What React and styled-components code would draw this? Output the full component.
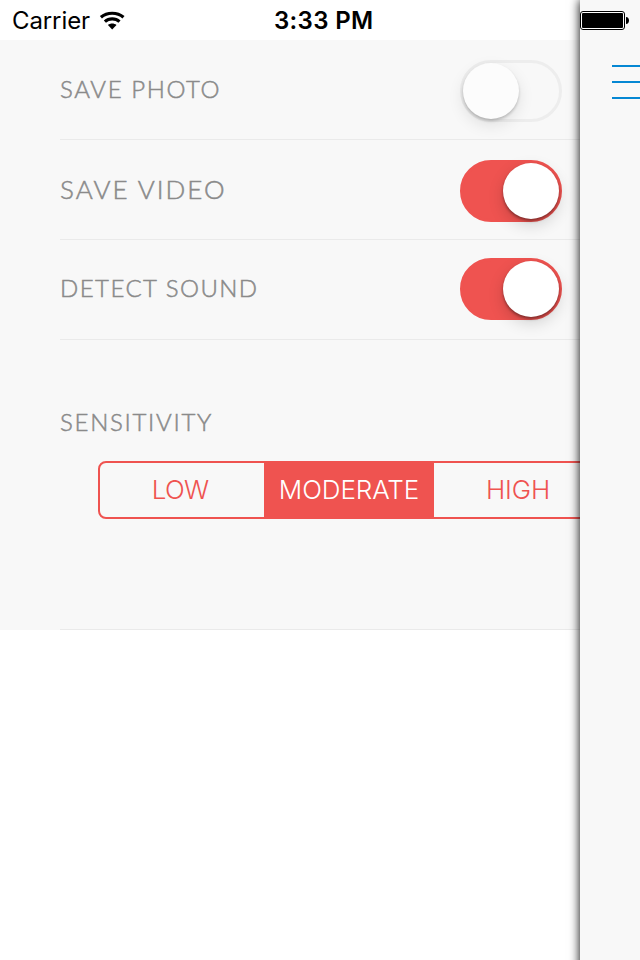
import React from "react";
import styled, { createGlobalStyle } from "styled-components";

const GlobalStyle = createGlobalStyle`
  * { box-sizing: border-box; }
  body { margin: 0; background: #fff; font-family: Inter, sans-serif; }
`;

const RED = "#ef5350";

const Screen = styled.div`
  display: grid;
  grid-template-columns: 580px 60px;
  width: 640px;
  height: 960px;
  overflow: hidden;
  background: #fff;
`;

const Drawer = styled.main`
  min-width: 0;
  overflow: hidden;
`;

const StatusBar = styled.header`
  display: grid;
  grid-template-columns: 78px 26px 1fr;
  column-gap: 9px;
  align-items: center;
  height: 40px;
  padding: 1px 0 0 12px;
  color: #000;
  font-size: 24px;
  line-height: 39px;
  white-space: nowrap;
`;

const Carrier = styled.span`
  letter-spacing: -0.1px;
`;

const Clock = styled.time`
  padding-left: 140px;
  font-weight: 560;
  letter-spacing: 0.35px;
`;

const WifiIcon = styled.svg`
  display: block;
  width: 26px;
  height: 20px;
`;

const Settings = styled.section`
  height: 590px;
  padding-left: 60px;
  background: #f8f8f8;
`;

const SettingRow = styled.div`
  display: flex;
  justify-content: space-between;
  align-items: flex-start;
  height: 100px;
  padding: ${(p) => p.$top}px 18px 0 0;
  border-bottom: 1px solid #eaeaea;
`;

const Label = styled.span`
  display: block;
  margin-top: ${(p) => p.$shift || 0}px;
  color: #8a8a8a;
  -webkit-text-stroke: 0.5px #8a8a8a;
  font-family: Lato, sans-serif;
  font-weight: 300;
  font-size: ${(p) => p.$size || 24}px;
  line-height: 58px;
  letter-spacing: ${(p) => p.$spacing}px;
  white-space: nowrap;
`;

const Toggle = styled.button`
  display: flex;
  justify-content: ${(p) => (p.$on ? "flex-end" : "flex-start")};
  flex: none;
  width: 102px;
  height: 62px;
  padding: 0;
  border: 3px solid ${(p) => (p.$on ? RED : "#ededed")};
  border-radius: 31px;
  background: ${(p) => (p.$on ? RED : "#f8f8f8")};
`;

const Knob = styled.span`
  width: 56px;
  height: 56px;
  border-radius: 50%;
  background: ${(p) => (p.$on ? "#fff" : "#fcfcfc")};
  box-shadow: ${(p) =>
    p.$on
      ? "0 2px 3px rgba(0,0,0,.38), 0 6px 16px rgba(0,0,0,.16)"
      : "0 2px 3px rgba(0,0,0,.2), 0 6px 16px rgba(0,0,0,.1)"};
`;

const Sensitivity = styled.div`
  height: 290px;
  padding-top: 53px;
  border-bottom: 1px solid #eaeaea;
`;

const Segments = styled.div`
  display: grid;
  grid-template-columns: 164px 170px 166px;
  width: 504px;
  height: 58px;
  margin: 10px 0 0 38px;
  border: 2px solid ${RED};
  border-radius: 8px;
`;

const Segment = styled.button`
  padding: 0 ${(p) => p.$inset || 0}px 0 ${(p) => p.$nudge || 0}px;
  border: 0;
  background: ${(p) => (p.$active ? RED : "transparent")};
  color: ${(p) => (p.$active ? "#fff" : RED)};
  font: 350 26px/54px Inter, sans-serif;
  letter-spacing: ${(p) => p.$spacing}px;
`;

const SidePanel = styled.aside`
  position: relative;
  height: 972px;
  background: #f8f8f8;
  box-shadow: 0 0 10px #000;
`;

const BatteryIcon = styled.svg`
  display: block;
  width: 50px;
  height: 20px;
  margin-top: 11px;
`;

const MenuButton = styled.button`
  display: grid;
  gap: 14px;
  width: 28px;
  margin: 34px 0 0 32px;
  padding: 0;
  border: 0;
  background: none;
`;

const MenuLine = styled.span`
  height: 2px;
  background: #0587d3;
`;

const rows = [
  { name: "SAVE PHOTO", top: 20, shift: 0, on: false, size: 24, spacing: 1.6 },
  { name: "SAVE VIDEO", top: 20, shift: 0, on: true, size: 26, spacing: 2 },
  { name: "DETECT SOUND", top: 18, shift: 1, on: true, size: 24, spacing: 1.45 },
];

export default function App() {
  return (
    <>
      <GlobalStyle />
      <Screen>
        <Drawer>
          <StatusBar>
            <Carrier>Carrier</Carrier>
            <WifiIcon viewBox="0 0 26 20">
              <g fill="none" stroke="#000" strokeWidth="3.2">
                <path d="M1.9 6.3C8.2 .9 18.2 .9 24.5 6.3" />
                <path d="M5.9 10.6C10 7 16.4 7 20.5 10.6" />
              </g>
              <path d="M8.9 14C11.3 12 15.1 12 17.5 14L13.2 18.5Z" />
            </WifiIcon>
            <Clock>3:33 PM</Clock>
          </StatusBar>
          <Settings>
            {rows.map((r) => (
              <SettingRow key={r.name} $top={r.top}>
                <Label $size={r.size} $spacing={r.spacing} $shift={r.shift}>
                  {r.name}
                </Label>
                <Toggle $on={r.on} role="switch" aria-checked={r.on} aria-label={r.name}>
                  <Knob $on={r.on} />
                </Toggle>
              </SettingRow>
            ))}
            <Sensitivity>
              <Label $spacing={1.7}>SENSITIVITY</Label>
              <Segments>
                <Segment $spacing={-0.7} $inset={4}>LOW</Segment>
                <Segment $active $spacing={-0.1}>MODERATE</Segment>
                <Segment $spacing={-0.1} $nudge={2}>HIGH</Segment>
              </Segments>
            </Sensitivity>
          </Settings>
        </Drawer>
        <SidePanel>
          <BatteryIcon viewBox="0 0 50 20">
            <rect x="0.5" y="0.5" width="44" height="18" rx="2.5" fill="#fff" stroke="#000" />
            <rect x="2" y="2" width="41" height="15" rx="1" />
            <path d="M46 6C50 6 50 13 46 13Z" />
          </BatteryIcon>
          <MenuButton aria-label="Menu">
            <MenuLine />
            <MenuLine />
            <MenuLine />
          </MenuButton>
        </SidePanel>
      </Screen>
    </>
  );
}
